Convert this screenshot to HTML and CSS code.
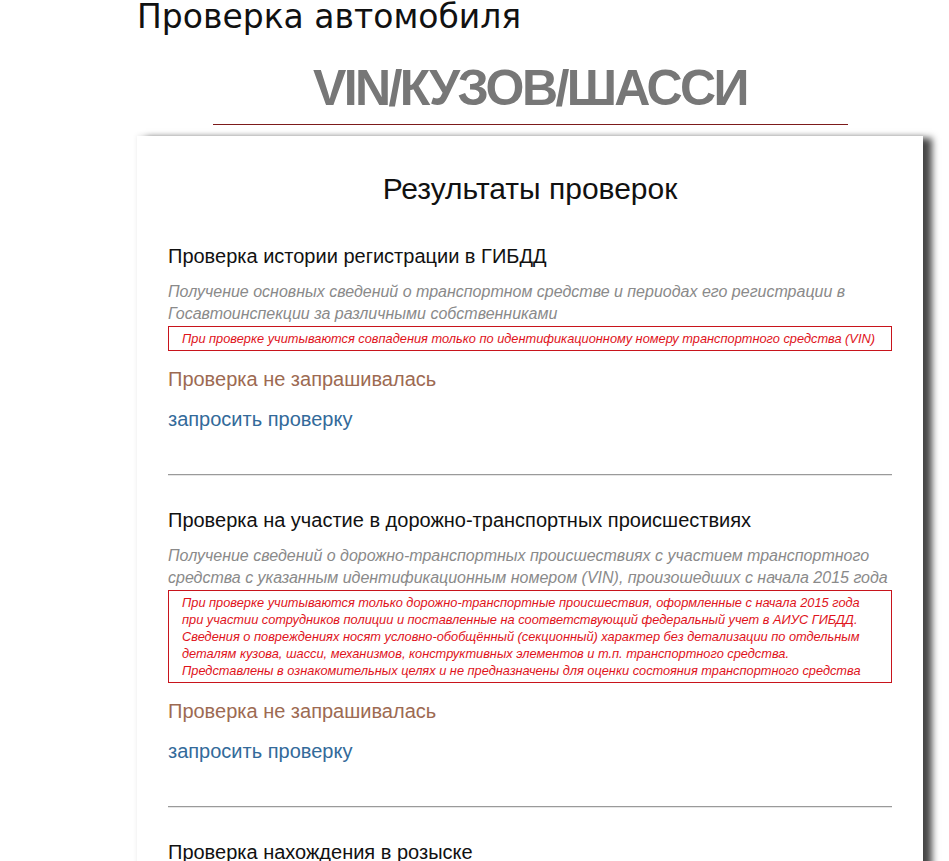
FILE: index.html
```html
<!DOCTYPE html>
<html lang="ru">
<head>
<meta charset="utf-8">
<title>Проверка автомобиля</title>
<link rel="stylesheet" href="styles.css">
</head>
<body>
<div class="page">
  <h1 class="page-title">Проверка автомобиля</h1>
  <h2 class="mode-title">VIN/КУЗОВ/ШАССИ</h2>
  <hr class="mode-rule">
  <div class="card">
    <h2 class="card-title">Результаты проверок</h2>

    <section class="check">
      <h3 class="check-title">Проверка истории регистрации в ГИБДД</h3>
      <p class="check-desc">Получение основных сведений о транспортном средстве и периодах его регистрации в Госавтоинспекции за различными собственниками</p>
      <div class="check-note">При проверке учитываются совпадения только по идентификационному номеру транспортного средства (VIN)</div>
      <p class="check-status">Проверка не запрашивалась</p>
      <a class="check-link" href="#">запросить проверку</a>
    </section>
    <hr class="check-rule">

    <section class="check">
      <h3 class="check-title">Проверка на участие в дорожно-транспортных происшествиях</h3>
      <p class="check-desc">Получение сведений о дорожно-транспортных происшествиях с участием транспортного средства с указанным идентификационным номером (VIN), произошедших с начала 2015 года</p>
      <div class="check-note">При проверке учитываются только дорожно-транспортные происшествия, оформленные с начала 2015 года<br>при участии сотрудников полиции и поставленные на соответствующий федеральный учет в АИУС ГИБДД.<br>Сведения о повреждениях носят условно-обобщённый (секционный) характер без детализации по отдельным<br>деталям кузова, шасси, механизмов, конструктивных элементов и т.п. транспортного средства.<br>Представлены в ознакомительных целях и не предназначены для оценки состояния транспортного средства</div>
      <p class="check-status">Проверка не запрашивалась</p>
      <a class="check-link" href="#">запросить проверку</a>
    </section>
    <hr class="check-rule">

    <section class="check">
      <h3 class="check-title">Проверка нахождения в розыске</h3>
    </section>
  </div>
</div>
</body>
</html>
```

FILE: styles.css
```css
html, body {
  margin: 0;
  padding: 0;
  background: #fff;
}
body {
  font-family: "Liberation Sans", Arial, sans-serif;
  color: #111;
}
.page {
  margin-left: 137px;
  width: 786px;
}
.page-title {
  margin: 0;
  font-family: "DejaVu Sans", Verdana, sans-serif;
  font-weight: normal;
  font-size: 33px;
  line-height: 34px;
  color: #111;
}
.mode-title {
  margin: 27px 0 0;
  text-align: center;
  font-family: "Liberation Sans", Arial, sans-serif;
  font-weight: bold;
  font-size: 50px;
  line-height: 54px;
  letter-spacing: -2.6px;
  color: #777;
}
.mode-rule {
  width: 635px;
  margin: 9px auto 0;
  border: 0;
  border-top: 1px solid #7d1b1b;
  height: 0;
}
.card {
  margin-top: 11px;
  padding: 35px 31px 120px;
  background: #fff;
  box-shadow: 9px 2px 7px rgba(0, 0, 0, 0.72), 0 -1px 5px rgba(0, 0, 0, 0.08);
}
.card-title {
  margin: 0 0 37px;
  text-align: center;
  font-weight: normal;
  font-size: 30px;
  line-height: 36px;
  color: #111;
}
.check-title {
  margin: 0;
  font-weight: normal;
  font-size: 20px;
  line-height: 24px;
  color: #111;
}
.check-desc {
  margin: 13px 0 0;
  font-style: italic;
  font-size: 16px;
  line-height: 22px;
  color: #8a8a8a;
}
.check-note {
  margin-top: 1px;
  border: 1px solid #c8141c;
  padding: 3px 13px 3px;
  font-style: italic;
  font-size: 12.8px;
  line-height: 17px;
  color: #e0131b;
}
.check-status {
  margin: 16px 0 0;
  font-size: 20px;
  line-height: 24px;
  color: #9d6a52;
}
.check-link {
  display: block;
  margin-top: 16px;
  font-size: 20px;
  line-height: 24px;
  color: #336a9a;
  text-decoration: none;
}
.check-rule {
  margin: 43px 0 32px;
  border: 0;
  border-top: 1px solid #9a9a9a;
  border-bottom: 1px solid #e6e6e6;
  height: 0;
}
```
